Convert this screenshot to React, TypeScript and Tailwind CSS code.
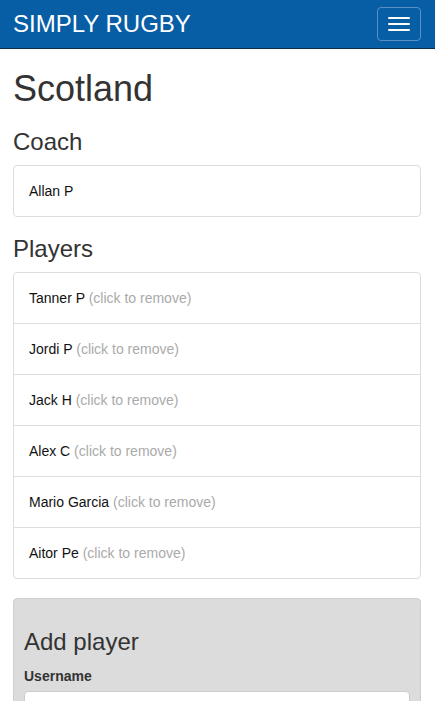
import React from "react";

const players = ["Tanner P", "Jordi P", "Jack H", "Alex C", "Mario Garcia", "Aitor Pe"];

function Navbar() {
  return (
    <nav className="flex h-[49px] items-center justify-between border-b border-[#0b2e4d] bg-[#075ea5] pl-[13px] pr-[14px]">
      <a className="text-[24px] leading-none text-white">SIMPLY RUGBY</a>
      <button className="flex h-[34px] w-[44px] flex-col items-center justify-center gap-[4px] rounded-[4px] border border-[#5a8fc6] bg-transparent">
        <span className="block h-[2px] w-[22px] rounded-[1px] bg-white" />
        <span className="block h-[2px] w-[22px] rounded-[1px] bg-white" />
        <span className="block h-[2px] w-[22px] rounded-[1px] bg-white" />
      </button>
    </nav>
  );
}

function Item({ name, hint }: { name: string; hint?: boolean }) {
  return (
    <li className="-mb-px border border-[#ddd] bg-white px-[15px] py-[15px] text-[14px] leading-[20px] text-[#111] first:rounded-t-[4px] last:mb-0 last:rounded-b-[4px]">
      {name}
      {hint && <span className="text-[#aaa]"> (click to remove)</span>}
    </li>
  );
}

export default function App() {
  return (
    <div className="min-h-screen bg-white font-['Liberation_Sans',Arial,sans-serif] text-[#333]">
      <Navbar />
      <main className="pl-[13px] pr-[14px]">
        <h1 className="mt-[20px] mb-[10px] text-[36px] leading-[1.1]">Scotland</h1>
        <h3 className="mt-[20px] mb-[10px] text-[24px] leading-[1.1]">Coach</h3>
        <ul className="mb-[19px]">
          <Item name="Allan P" />
        </ul>
        <h3 className="mt-[19px] mb-[10px] text-[24px] leading-[1.1]">Players</h3>
        <ul className="mb-[19px]">
          {players.map((p) => (
            <Item key={p} name={p} hint />
          ))}
        </ul>
        <div className="rounded-[4px] border border-[#cfcfcf] bg-[#dcdcdc] p-[10px] pb-[19px]">
          <h3 className="mt-[20px] mb-[10px] text-[24px] leading-[1.1]">Add player</h3>
          <label className="mb-[5px] block text-[14px] font-bold leading-[20px]">Username</label>
          <input className="block h-[34px] w-full rounded-[4px] border border-[#ccc] bg-white px-[12px] text-[14px]" />
        </div>
      </main>
    </div>
  );
}
